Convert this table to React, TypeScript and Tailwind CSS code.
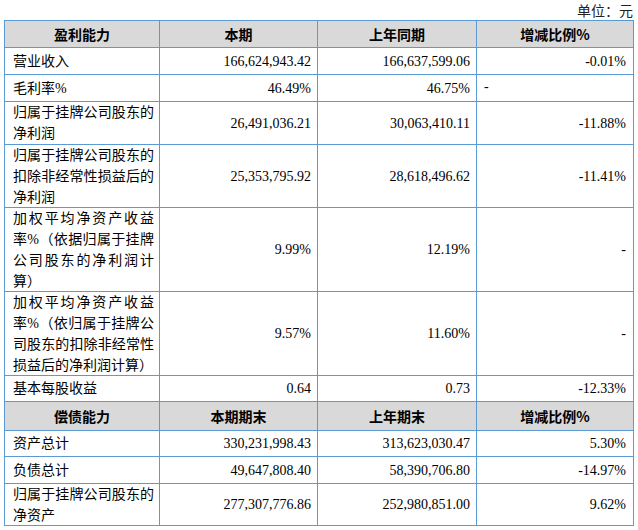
import React from "react";

type Row = {
  label: string;
  a: string;
  b: string;
  c: string;
  cLeft?: boolean;
};

const top: Row[] = [
  { label: "营业收入", a: "166,624,943.42", b: "166,637,599.06", c: "-0.01%" },
  { label: "毛利率%", a: "46.49%", b: "46.75%", c: "-", cLeft: true },
  { label: "归属于挂牌公司股东的净利润", a: "26,491,036.21", b: "30,063,410.11", c: "-11.88%" },
  { label: "归属于挂牌公司股东的扣除非经常性损益后的净利润", a: "25,353,795.92", b: "28,618,496.62", c: "-11.41%" },
  { label: "加权平均净资产收益率%（依据归属于挂牌公司股东的净利润计算）", a: "9.99%", b: "12.19%", c: "-" },
  { label: "加权平均净资产收益率%（依归属于挂牌公司股东的扣除非经常性损益后的净利润计算）", a: "9.57%", b: "11.60%", c: "-" },
  { label: "基本每股收益", a: "0.64", b: "0.73", c: "-12.33%" },
];

const bottom: Row[] = [
  { label: "资产总计", a: "330,231,998.43", b: "313,623,030.47", c: "5.30%" },
  { label: "负债总计", a: "49,647,808.40", b: "58,390,706.80", c: "-14.97%" },
  { label: "归属于挂牌公司股东的净资产", a: "277,307,776.86", b: "252,980,851.00", c: "9.62%" },
];

function Header({ cols }: { cols: string[] }) {
  return (
    <>
      {cols.map((t, i) => (
        <div
          key={i}
          className="bg-[#d9d9d9] flex items-center justify-center font-['Noto_Sans_CJK_SC',sans-serif] font-bold text-[14px] leading-[21px] text-black"
        >
          {t}
        </div>
      ))}
    </>
  );
}

function BodyRow({ r }: { r: Row }) {
  return (
    <>
      <div className="bg-white flex items-center pl-[8px] pr-[5px]">
        <div className="w-full text-justify leading-[21px] text-[14px] font-['Liberation_Serif','Noto_Sans_CJK_SC',serif] text-black">
          {r.label}
        </div>
      </div>
      <div className="bg-white flex items-center justify-end pr-[6px] text-[14px] font-['Liberation_Serif',serif] text-black">
        {r.a}
      </div>
      <div className="bg-white flex items-center justify-end pr-[6px] text-[14px] font-['Liberation_Serif',serif] text-black">
        {r.b}
      </div>
      <div
        className={
          r.cLeft
            ? "bg-white flex items-center justify-start pl-[7px] pb-[3px] text-[14px] font-['Liberation_Serif',serif] text-black"
            : "bg-white flex items-center justify-end pr-[7px] text-[14px] font-['Liberation_Serif',serif] text-black"
        }
      >
        {r.c}
      </div>
    </>
  );
}

export default function App() {
  return (
    <div className="w-[638px] h-[530px] bg-white pl-[4px]">
      <div className="w-[630px] h-[20px] flex items-center justify-end pr-[1px] text-[14px] font-['Noto_Sans_CJK_SC',sans-serif] text-[#222]">
        单位：元
      </div>
      <div className="w-[630px] grid grid-cols-[154px_157px_158px_156px] grid-rows-[26px_26px_26px_42px_62px_83px_83px_25px_28px_25px_26px_41px] gap-px p-px bg-[#5b9bd5]">
        <Header cols={["盈利能力", "本期", "上年同期", "增减比例%"]} />
        {top.map((r, i) => (
          <BodyRow key={i} r={r} />
        ))}
        <Header cols={["偿债能力", "本期期末", "上年期末", "增减比例%"]} />
        {bottom.map((r, i) => (
          <BodyRow key={i} r={r} />
        ))}
      </div>
    </div>
  );
}
